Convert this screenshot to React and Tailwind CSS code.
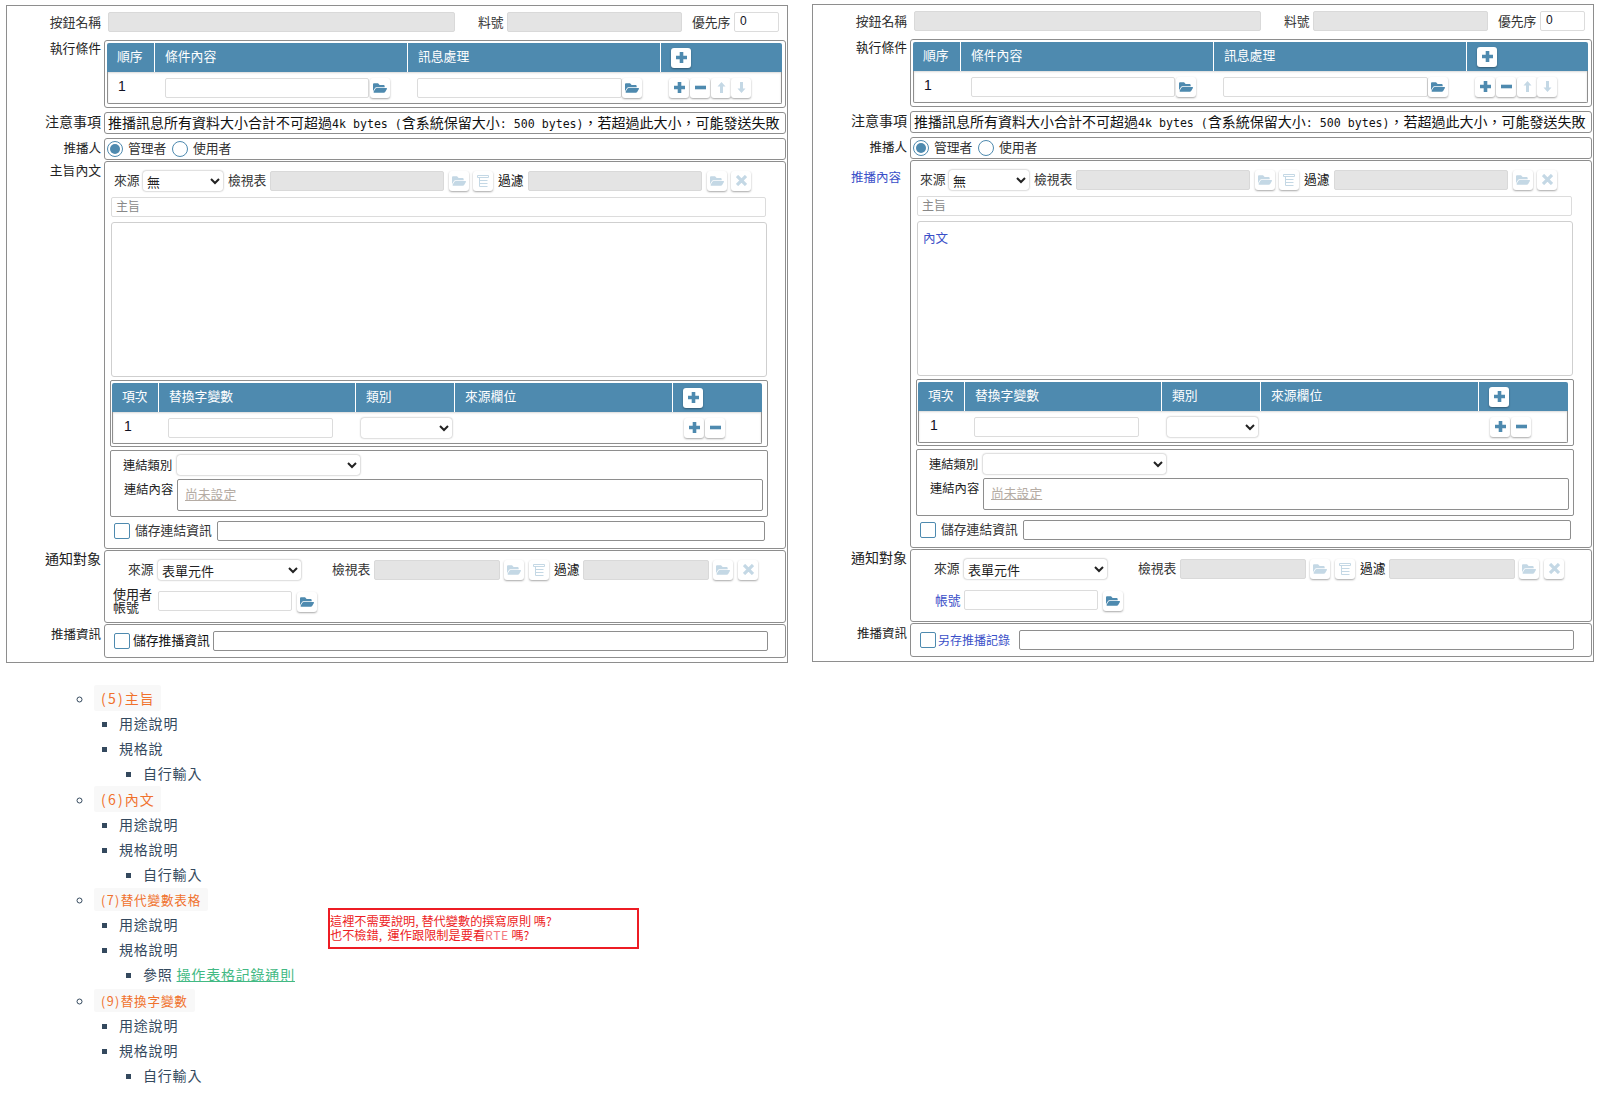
import { FaFolderOpen } from "react-icons/fa";

const sans = "font-['Noto_Sans_CJK_TC','Liberation_Sans',sans-serif]";
const mono = "font-['DejaVu_Sans_Mono',monospace] text-[11.6px]";
const blue = "text-[#3a4fc8]";
const comma = "\uFF0C";

function PlusIcon() {
  return (
    <svg width="11" height="11" viewBox="0 0 11 11" fill="currentColor">
      <path d="M3.7 0h3.6v3.7H11v3.6H7.3V11H3.7V7.3H0V3.7h3.7z" />
    </svg>
  );
}

function MinusIcon() {
  return (
    <svg width="11" height="11" viewBox="0 0 11 11" fill="currentColor">
      <path d="M0 3.7h11v3.6H0z" />
    </svg>
  );
}

function CloseIcon() {
  return (
    <svg width="11" height="11" viewBox="0 0 11 11" fill="none" stroke="currentColor" strokeWidth="3.2">
      <path d="M1 1l9 9M10 1l-9 9" />
    </svg>
  );
}

function UpIcon() {
  return (
    <svg width="9" height="11" viewBox="0 0 9 11" fill="currentColor">
      <path d="M4.5 0L8.5 4.5H6V11H3V4.5H.5z" />
    </svg>
  );
}

function DownIcon() {
  return (
    <svg width="9" height="11" viewBox="0 0 9 11" fill="currentColor">
      <path d="M4.5 11L8.5 6.5H6V0H3v6.5H.5z" />
    </svg>
  );
}

function FilterIcon() {
  return (
    <svg width="14" height="13" viewBox="0 0 14 13" fill="none" stroke="currentColor" strokeWidth="1">
      <path d="M1.5 1.5h11v2h-11zM3.5 3.5v9M3.5 6.5h8M3.5 9.5h8M3.5 12.5h8" />
    </svg>
  );
}

function FolderIcon() {
  return <FaFolderOpen size={14} />;
}

function Btn({ icon: Icon, off, className = "" }) {
  return (
    <div
      className={
        "w-[20px] h-[20px] shrink-0 bg-white rounded-[3px] shadow-[0_1px_2px_rgba(0,0,0,0.35)] flex items-center justify-center " +
        (off ? "text-[#c4d8e5] " : "text-[#4e8aaf] ") +
        className
      }
    >
      <Icon />
    </div>
  );
}

function Text({ className = "", color = "text-[#333]", size = "text-[12.8px]", children }) {
  return <span className={"shrink-0 whitespace-nowrap leading-[16px] " + size + " " + color + " " + className}>{children}</span>;
}

function Input({ className = "", children }) {
  return (
    <div className={"h-[20px] shrink-0 bg-white border rounded-[2px] text-[12px] leading-[16px] " + className}>
      {children}
    </div>
  );
}

function Disabled({ className = "" }) {
  return <div className={"h-[20px] shrink-0 bg-[#e4e4e4] border border-[#d9d9d9] rounded-[2px] " + className} />;
}

function Select({ className = "", label = "" }) {
  return (
    <select
      defaultValue={label}
      className={
        "h-[20px] shrink-0 bg-white rounded-[3px] border-0 shadow-[0_0_2px_rgba(0,0,0,0.45)] pl-0 text-[13px] text-[#222] " + sans + " " + className
      }
    >
      <option value={label}>{label}</option>
    </select>
  );
}

function Radio({ on, className = "" }) {
  return (
    <div className={"w-[16px] h-[16px] shrink-0 rounded-full border border-[#4e8aaf] flex items-center justify-center " + className}>
      {on && <div className="w-[10px] h-[10px] rounded-full bg-[#4e8aaf]" />}
    </div>
  );
}

function Check({ className = "" }) {
  return <div className={"w-[16px] h-[16px] shrink-0 rounded-[2px] border border-[#4e8aaf] bg-white " + className} />;
}

function Row({ label, labelClass = "text-[12.8px]", color = "text-[#222]", h, mt = "mt-px", children }) {
  return (
    <div className={"flex " + mt}>
      <div className={"w-[94px] shrink-0 text-right whitespace-nowrap leading-[16px] " + color + " " + labelClass}>{label}</div>
      <div className={"ml-[3px] mr-[1px] w-[682px] border border-[#8e8e8e] rounded-[3px] " + h}>{children}</div>
    </div>
  );
}

function Table({ cols, heads, className = "", children }) {
  return (
    <div className={className}>
      <div className={"h-[29px] bg-[#4e8aaf] rounded-t-[2px] grid " + cols}>
        {heads.map((head) => (
          <div key={head} className="border-r border-white pl-[10px] text-[12.8px] leading-[26px] text-white">
            {head}
          </div>
        ))}
        <div className="flex items-center pl-[10px]">
          <Btn icon={PlusIcon} />
        </div>
      </div>
      <div className="h-[32px] border border-t-0 border-[#8e8e8e] rounded-b-[2px] shadow-[inset_0_1px_2px_rgba(0,0,0,0.15)] flex items-center">
        {children}
      </div>
    </div>
  );
}

function SourceRow({ form, className = "" }) {
  return (
    <div className={"flex items-center h-[21px] " + className}>
      <Text className={"-mt-[2px] " + (form ? "ml-[23px] w-[26px]" : "ml-[9px] w-[24px]")}>來源</Text>
      <Select className={form ? "ml-[4px] w-[143px]" : "ml-[5px] w-[80px]"} label={form ? "表單元件" : "無"} />
      <Text className={"-mt-[2px] " + (form ? "ml-[31px] w-[38px]" : "ml-[5px] w-[38px]")}>檢視表</Text>
      <Disabled className={form ? "ml-[4px] w-[126px]" : "ml-[4px] w-[174px]"} />
      <Btn icon={FolderIcon} off className={form ? "ml-[4px]" : "ml-[5px]"} />
      <Btn icon={FilterIcon} off className={form ? "ml-[5px]" : "ml-[4px]"} />
      <Text color="text-[#111]" className="ml-[5px] w-[25px] -mt-[2px]">過濾</Text>
      <Disabled className={form ? "ml-[4px] w-[126px]" : "ml-[5px] w-[174px]"} />
      <Btn icon={FolderIcon} off className={form ? "ml-[4px]" : "ml-[5px]"} />
      <Btn icon={CloseIcon} off className={form ? "ml-[5px]" : "ml-[4px]"} />
    </div>
  );
}

function Panel({ alt }) {
  return (
    <div className="w-[782px] h-[658px] shrink-0 border border-[#8e8e8e] pt-[6px]">
      <div className="flex items-center h-[20px]">
        <div className="w-[94px] shrink-0 text-right text-[12.8px] leading-[16px] text-[#333]">按鈕名稱</div>
        <Disabled className="ml-[7px] w-[347px]" />
        <Text className="ml-[23px] w-[25px]">料號</Text>
        <Disabled className="ml-[4px] w-[175px]" />
        <Text className="ml-[10px] w-[37px]">優先序</Text>
        <Input className="ml-[5px] w-[45px] pl-[5px] border-[#dcdcdc] text-[#112] font-['Liberation_Sans',sans-serif]">0</Input>
      </div>

      <Row label="執行條件" mt="mt-[8px]" h="h-[68px]">
        <Table className="ml-[2px] mt-[2px] w-[675px]" cols="grid-cols-[48px_253px_253px_1fr]" heads={["順序", "條件內容", "訊息處理"]}>
          <span className="ml-[10px] w-[7px] shrink-0 -mt-[2px] text-[14px] font-['Liberation_Sans',sans-serif] text-[#112]">1</span>
          <Input className="ml-[40px] w-[204px] border-[#dcdcdc]" />
          <Btn icon={FolderIcon} className="ml-[1px]" />
          <Input className="ml-[27px] w-[205px] border-[#dcdcdc]" />
          <Btn icon={FolderIcon} />
          <Btn icon={PlusIcon} className="ml-[27px]" />
          <Btn icon={MinusIcon} className="ml-[1px]" />
          <Btn icon={UpIcon} off className="ml-[1px]" />
          <Btn icon={DownIcon} off />
        </Table>
      </Row>

      <Row label="注意事項" labelClass="text-[14px] pt-px" mt="mt-[4px]" h="h-[22px]">
        <div className="pl-[3px] text-[14px] leading-[18px] whitespace-nowrap text-[#111]">
          推播訊息所有資料大小合計不可超過<span className={mono}>4k bytes (</span>含系統保留大小<span className={mono}>: 500 bytes)</span>{comma}若超過此大小{comma}可能發送失敗
        </div>
      </Row>

      <Row label="推播人" labelClass="text-[12.5px] pt-[2px]" mt="mt-[4px]" h="h-[22px]">
        <div className="flex items-center h-full">
          <Radio on className="ml-[2px]" />
          <Text className="ml-[5px] w-[38px] -mt-[3px]">管理者</Text>
          <Radio className="ml-[6px]" />
          <Text className="ml-[5px] w-[38px] -mt-[3px]">使用者</Text>
        </div>
      </Row>

      <Row
        label={alt ? "推播內容" : "主旨內文"}
        labelClass={alt ? "text-[12.5px] pr-[6px] pt-[9px]" : "text-[12.8px] pt-px"}
        color={alt ? blue : "text-[#222]"}
        h="h-[388px]"
      >
        <SourceRow className="mt-[8px]" />
        <Input className="ml-[6px] mt-[6px] w-[655px] pl-[4px] border-[#dcdcdc] text-[#888]">主旨</Input>
        <div className={"ml-[6px] mt-[5px] w-[656px] h-[155px] border border-[#cfcfcf] rounded-[3px] pl-[5px] pt-[8px] text-[12.5px] leading-[16px] " + blue}>
          {alt ? "內文" : ""}
        </div>
        <div className="ml-[5px] mt-[3px] w-[658px] h-[67px] border border-[#8e8e8e] rounded-[2px] pl-[1px] pt-[2px]">
          <Table className="w-[650px]" cols="grid-cols-[47px_197px_99px_218px_1fr]" heads={["項次", "替換字變數", "類別", "來源欄位"]}>
            <span className="ml-[11px] w-[7px] shrink-0 -mt-[2px] text-[14px] font-['Liberation_Sans',sans-serif] text-[#112]">1</span>
            <Input className="ml-[37px] w-[165px] border-[#dcdcdc]" />
            <Select className="ml-[28px] w-[91px]" />
            <Btn icon={PlusIcon} className="ml-[232px]" />
            <Btn icon={MinusIcon} className="ml-[1px]" />
          </Table>
        </div>
        <div className="ml-[5px] mt-[3px] w-[658px] h-[67px] border border-[#8e8e8e] rounded-[2px]">
          <div className="flex items-center mt-[4px]">
            <Text size="text-[12.3px]" color="text-[#222]" className="ml-[12px] w-[48px]">連結類別</Text>
            <Select className="ml-[6px] w-[183px]" />
          </div>
          <div className="flex mt-[4px]">
            <Text size="text-[12.3px]" color="text-[#222]" className="ml-[13px] w-[48px] mt-[2px]">連結內容</Text>
            <div className="ml-[5px] w-[586px] h-[32px] border border-[#8e8e8e] rounded-[2px] pl-[7px] pt-[6px] text-[12.8px] leading-[16px] text-[#b5aca4] underline">
              尚未設定
            </div>
          </div>
        </div>
        <div className="flex items-center mt-[4px] h-[20px]">
          <Check className="ml-[9px]" />
          <Text className="ml-[5px] w-[77px] -mt-[2px]">儲存連結資訊</Text>
          <Input className="ml-[5px] w-[548px] border-[#8e8e8e]" />
        </div>
      </Row>

      <Row label="通知對象" labelClass="text-[14px]" h="h-[73px]">
        <SourceRow form className="mt-[8px]" />
        <div className="flex items-center mt-[9px] h-[23px]">
          {alt ? (
            <Text color={blue} className="ml-[24px] w-[24px]">帳號</Text>
          ) : (
            <div className="ml-[8px] w-[40px] -mt-[2px] text-[13px] leading-[13px] text-[#222]">
              使用者
              <br />
              帳號
            </div>
          )}
          <Input className="ml-[5px] w-[134px] border-[#dcdcdc]" />
          <Btn icon={FolderIcon} className="ml-[5px] mt-[2px]" />
        </div>
      </Row>

      <Row label="推播資訊" labelClass="text-[12.5px] pt-[2px]" h="h-[34px]">
        <div className="flex items-center h-full">
          <Check className="ml-[9px]" />
          {alt ? (
            <Text color={blue} size="text-[12px]" className="ml-[2px] w-[78px]">另存推播記錄</Text>
          ) : (
            <Text color="text-[#111]" className="ml-[3px] w-[77px] -mt-[2px]">儲存推播資訊</Text>
          )}
          <Input className="ml-[3px] w-[555px] border-[#8e8e8e]" />
        </div>
      </Row>
    </div>
  );
}

function Chip({ small, tag, children }) {
  return (
    <span
      className={
        "bg-[#f8f8f8] rounded-[2px] px-[7px] text-[#f0712c] " +
        (small ? "text-[12.6px] py-[2px]" : "text-[14px] py-[3px]")
      }
    >
      <span className={small ? "tracking-[1.4px]" : "tracking-[2.2px]"}>{tag}</span>
      {children}
    </span>
  );
}

function Section({ tag, chip, small, spec = "規格說明", children }) {
  return (
    <li>
      <Chip small={small} tag={tag}>{chip}</Chip>
      <ul className="list-[square] pl-[25px]">
        <li>用途說明</li>
        <li>
          {spec}
          <ul className="list-[square] pl-[24px]">
            <li>{children}</li>
          </ul>
        </li>
      </ul>
    </li>
  );
}

export default function App() {
  return (
    <div className={"relative w-[1603px] h-[1110px] bg-white overflow-hidden " + sans}>
      <div className="flex gap-[24px] pl-[6px] pt-[5px]">
        <Panel />
        <div className="-mt-px">
          <Panel alt />
        </div>
      </div>

      <ul className="list-[circle] pl-[94px] mt-[23px] text-[14px] leading-[25.13px] tracking-[0.8px] text-[#34495e]">
        <Section tag="(5)" chip="主旨" spec="規格說">自行輸入</Section>
        <Section tag="(6)" chip="內文">自行輸入</Section>
        <Section tag="(7)" chip="替代變數表格" small>
          參照 <span className="text-[#42b983] underline">操作表格記錄通則</span>
        </Section>
        <Section tag="(9)" chip="替換字變數" small>自行輸入</Section>
      </ul>

      <div className="absolute left-[328px] top-[908px] w-[311px] h-[41px] border-2 border-[#ed1c24] pt-[4px] text-[12.2px] leading-[14px] text-[#ed1c24] whitespace-nowrap">
        這裡不需要說明, 替代變數的撰寫原則 嗎?
        <br />
        也不檢錯,&nbsp; 運作跟限制是要看<span className="text-[#f47a80] tracking-[0.5px]">RTE</span> 嗎?
      </div>
    </div>
  );
}
